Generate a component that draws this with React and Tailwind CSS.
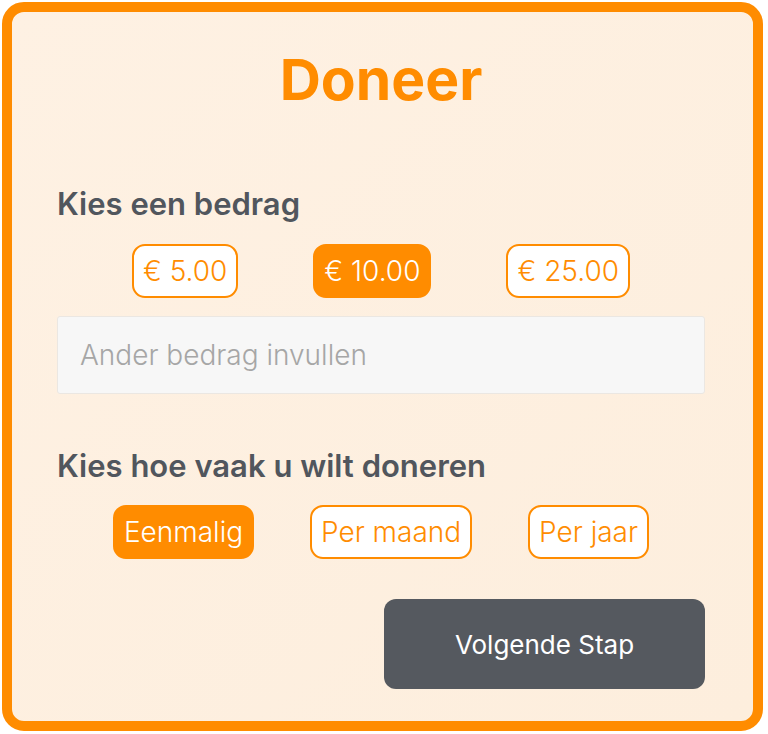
import React, { useState } from "react";

const amounts = ["€ 5.00", "€ 10.00", "€ 25.00"];
const frequencies = ["Eenmalig", "Per maand", "Per jaar"];

function Choice({ label, active, onClick }) {
  return (
    <button
      type="button"
      onClick={onClick}
      className={`h-[54px] px-[9px] rounded-[13px] border-2 border-[#ff8c00] text-[28px] leading-none font-light ${
        active ? "bg-[#ff8c00] text-white" : "bg-white text-[#ff8c00]"
      }`}
    >
      {label}
    </button>
  );
}

function App() {
  const [amount, setAmount] = useState(1);
  const [frequency, setFrequency] = useState(0);
  const [custom, setCustom] = useState("");

  return (
    <div className="w-[768px] h-[734px] bg-white p-[2px] font-['Inter','Noto_Sans',sans-serif]">
      <div className="h-[729px] w-[761px] rounded-[22px] border-[10px] border-[#ff8c00] bg-gradient-to-br from-[#fef1e3] to-[#fdeedd] pl-[45px] pr-[48px] pt-[40px]">
        <h1 className="text-center text-[57px] leading-[56px] font-bold text-[#ff8c00]">
          Doneer
        </h1>

        <h2 className="mt-[78px] text-[31px] leading-[35px] font-semibold text-[#51565d]">
          Kies een bedrag
        </h2>
        <div className="mt-[23px] flex justify-evenly">
          {amounts.map((a, i) => (
            <Choice
              key={a}
              label={a}
              active={amount === i}
              onClick={() => setAmount(i)}
            />
          ))}
        </div>
        <input
          type="text"
          value={custom}
          onChange={(e) => setCustom(e.target.value)}
          placeholder="Ander bedrag invullen"
          className="mt-[18px] block h-[78px] w-full rounded-[3px] border border-[#ebe7e2] bg-[#f7f7f7] px-[22px] text-[28px] font-light text-[#51565d] placeholder:text-[#a6a6a6] outline-none"
        />

        <h2 className="mt-[54px] text-[31px] leading-[35px] font-semibold text-[#51565d]">
          Kies hoe vaak u wilt doneren
        </h2>
        <div className="mt-[22px] flex justify-evenly">
          {frequencies.map((f, i) => (
            <Choice
              key={f}
              label={f}
              active={frequency === i}
              onClick={() => setFrequency(i)}
            />
          ))}
        </div>

        <div className="mt-[40px] flex justify-end">
          <button
            type="button"
            className="h-[90px] w-[321px] rounded-[12px] bg-[#55595f] text-[26px] text-white"
          >
            Volgende Stap
          </button>
        </div>
      </div>
    </div>
  );
}

export default App;
